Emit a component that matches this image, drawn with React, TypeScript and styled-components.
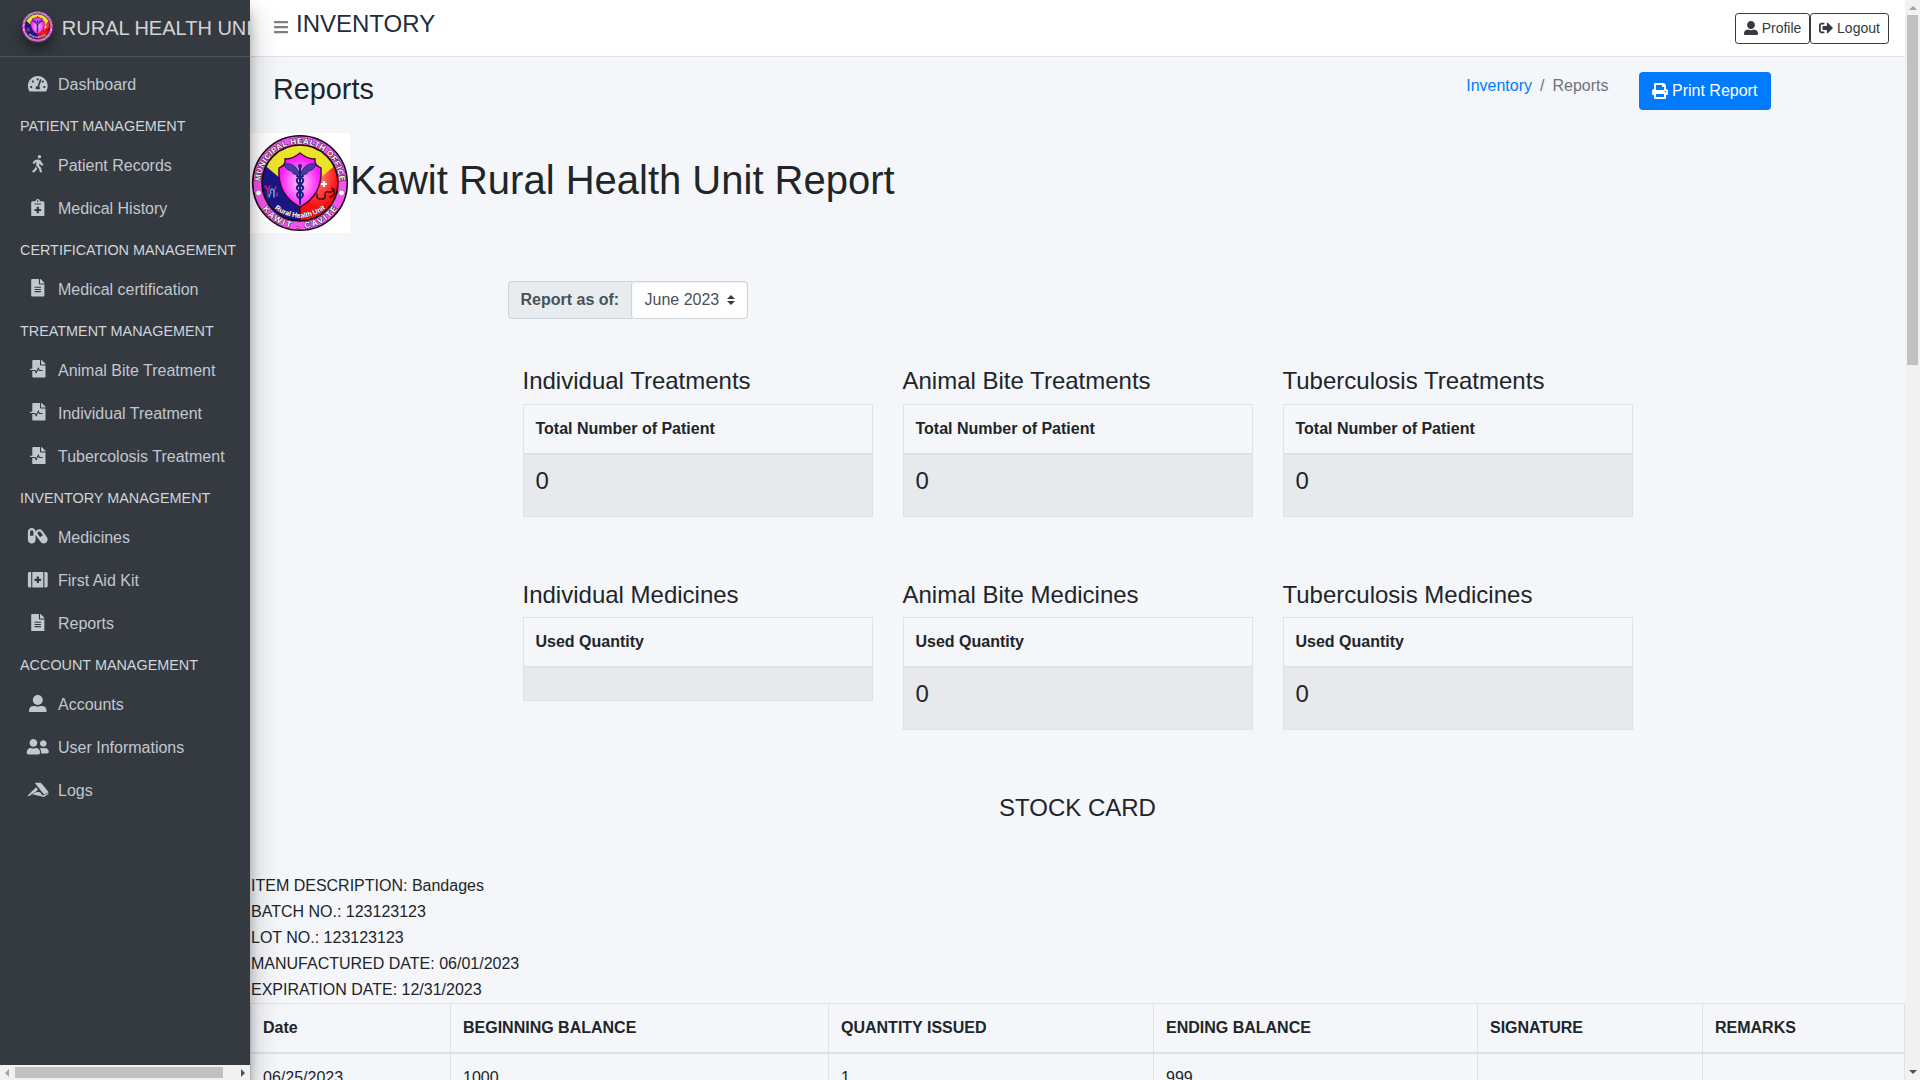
import React from "react";
import styled, { createGlobalStyle } from "styled-components";
import {
  FaTachometerAlt, FaWalking, FaNotesMedical, FaFileAlt, FaFileMedicalAlt, FaCapsules,
  FaFirstAid, FaUserAlt, FaUserFriends, FaAccusoft, FaBars, FaSignOutAlt, FaPrint,
} from "react-icons/fa";

const Global = createGlobalStyle`
  *, *::before, *::after { box-sizing: border-box; }
  body {
    margin: 0;
    background: #f4f6f9;
    color: #212529;
    font: 400 16px/1.5 "Liberation Sans", Arial, sans-serif;
    overflow: hidden;
  }
  h1, h3, h4, p { margin: 0; font-weight: 400; line-height: 1.2; }
`;

const Page = styled.div`
  display: flex;
  width: 1920px;
  height: 1080px;
  overflow: hidden;
`;

/* ---------- sidebar ---------- */
const Sidebar = styled.aside`
  position: relative;
  z-index: 2;
  flex: 0 0 250px;
  width: 250px;
  display: flex;
  flex-direction: column;
  background: #343a40;
  box-shadow: 0 14px 28px rgba(0, 0, 0, 0.25), 0 10px 10px rgba(0, 0, 0, 0.22);
`;

const Brand = styled.div`
  flex: none;
  display: flex;
  height: 57px;
  padding: 13px 0 0 20.8px;
  overflow: hidden;
  border-bottom: 1px solid #4b545c;
  color: rgba(255, 255, 255, 0.8);
  font-size: 20px;
  line-height: 30px;
  white-space: nowrap;
`;

const BrandImage = styled.span`
  flex: none;
  width: 33px;
  height: 33px;
  margin: -3px 8px 0 0;
  border-radius: 50%;
  box-shadow: 0 10px 20px rgba(0, 0, 0, 0.19), 0 6px 6px rgba(0, 0, 0, 0.23);
`;

const Nav = styled.nav`
  flex: 1;
  padding: 8px 8px 0;
`;

const NavHeader = styled.div`
  padding: 8px 0 8px 12px;
  color: #d0d4db;
  font-size: 14.4px;
  line-height: 21.6px;
  white-space: nowrap;
`;

const NavLink = styled.a`
  display: flex;
  height: 40px;
  margin-bottom: 3.2px;
  padding: 8px 16px;
  color: #c2c7d0;
  white-space: nowrap;
`;

const NavIcon = styled.span`
  flex: none;
  width: 25.6px;
  margin: 1.7px 7.6px 0 0.8px;
  svg { display: block; width: 25.6px; height: 17.6px; }
`;

const HScroll = styled.div`
  flex: none;
  display: flex;
  align-items: center;
  height: 15px;
  background: #f1f1f1;
`;

const HThumb = styled.div`
  width: 208px;
  height: 11px;
  margin-right: 18px;
  background: #c1c1c1;
`;

const Arrow = styled.span<{ $dir: "left" | "right" | "up" | "down"; $muted?: boolean }>`
  width: 0;
  height: 0;
  border: 4px solid transparent;
  ${(p) => {
    const c = p.$muted ? "#a3a3a3" : "#505050";
    if (p.$dir === "left") return `border-right-color:${c};border-left-width:0;margin:0 6px 0 5px;`;
    if (p.$dir === "right") return `border-left-color:${c};border-right-width:0;`;
    if (p.$dir === "up") return `border-bottom-color:${c};border-top-width:0;margin:6px 0 5px;`;
    return `border-top-color:${c};border-bottom-width:0;margin:auto 0 6px;`;
  }}
`;

/* ---------- main column ---------- */
const Main = styled.main`
  flex: 1;
  min-width: 0;
  display: flex;
  flex-direction: column;
`;

const Navbar = styled.header`
  flex: none;
  display: flex;
  justify-content: space-between;
  height: 57px;
  padding: 0 16px 0 24px;
  background: #fff;
  border-bottom: 1px solid #dee2e6;
`;

const NavTitle = styled.div`
  display: flex;
  gap: 8px;
  color: #1f2d3d;
  font-size: 24px;
  line-height: 28.8px;
  padding-top: 10px;
  svg { width: 14px; height: 16px; margin-top: 9px; color: rgba(0, 0, 0, 0.5); }
`;

const NavActions = styled.div`
  display: flex;
  padding-top: 13px;
`;

const SmallButton = styled.button<{ $width: number }>`
  display: flex;
  align-items: center;
  justify-content: center;
  gap: 4px;
  width: ${(p) => p.$width}px;
  height: 31px;
  padding: 0;
  border: 1px solid #343a40;
  border-radius: 3.2px;
  background: transparent;
  color: #343a40;
  font: 14px/21px "Liberation Sans", Arial, sans-serif;
  svg { flex: none; margin-top: -1px; }
`;

const ContentHeader = styled.div`
  flex: none;
  display: flex;
  align-items: flex-start;
  height: 76px;
  padding: 15px 134px 0 23px;
`;

const PageTitle = styled.h1`
  flex: 1;
  font-size: 28.8px;
`;

const Breadcrumb = styled.div`
  display: flex;
  gap: 8px;
  margin: 2px 30.5px 0 0;
  color: #6c757d;
  a { color: #007bff; }
`;

const PrintButton = styled.button`
  display: flex;
  align-items: center;
  gap: 4px;
  width: 132px;
  height: 38px;
  padding: 0 0 0 13px;
  border: 0;
  border-radius: 4px;
  background: #007bff;
  color: #fff;
  font: 16px/24px "Liberation Sans", Arial, sans-serif;
  white-space: nowrap;
  svg { flex: none; margin-top: -1px; }
`;

const ReportHead = styled.div`
  flex: none;
  display: flex;
  height: 148px;
`;

const LogoBox = styled.div`
  width: 100px;
  height: 100px;
  background: #fff;
`;

const ReportTitle = styled.h1`
  margin-top: 23px;
  font-size: 40px;
`;

const Container = styled.section`
  flex: none;
  width: 1140px;
  margin: 0 auto;
`;

const InputGroup = styled.div`
  display: flex;
  width: 240px;
  height: 38px;
  color: #495057;
`;

const GroupLabel = styled.div`
  width: 124px;
  padding: 6px 0 0 12px;
  border: 1px solid #ced4da;
  border-right: 0;
  border-radius: 4px 0 0 4px;
  background: #e9ecef;
  font-weight: 700;
`;

const Select = styled.div`
  display: flex;
  flex: 1;
  justify-content: space-between;
  padding: 6px 12px 6px 13px;
  margin-left: -1px;
  border: 1px solid #ced4da;
  border-radius: 4px;
  background: #fff;
  box-shadow: inset 0 1px 2px rgba(0, 0, 0, 0.075);
  svg { margin-top: 7px; }
`;

const CardRow = styled.div<{ $top: number }>`
  display: grid;
  grid-template-columns: repeat(3, 350px);
  column-gap: 30px;
  align-items: start;
  padding: ${(p) => p.$top}px 15px 0;
`;

const CardTitle = styled.h4`
  height: 37px;
  font-size: 24px;
  line-height: 29px;
`;

const Card = styled.div`
  border: 1px solid #dee2e6;
`;

const CardHead = styled.div`
  height: 50px;
  padding: 12px;
  border-bottom: 2px solid #dee2e6;
  font-weight: 700;
`;

const CardBody = styled.div<{ $empty: boolean }>`
  height: ${(p) => (p.$empty ? 32 : 61)}px;
  padding: 12px;
  background: rgba(0, 0, 0, 0.05);
  font-size: 24px;
  line-height: 28.8px;
`;

const Treatments = styled.div`
  height: 212px;
  ${CardTitle} { height: 38px; }
`;

const Medicines = styled.div`
  height: 213px;
`;

const StockTitle = styled.h4`
  flex: none;
  height: 129px;
  padding-top: 50px;
  font-size: 24px;
  text-align: center;
`;

const ItemInfo = styled.div`
  flex: none;
  padding-left: 1px;
  line-height: 26px;
`;

const StockTable = styled.table`
  table-layout: fixed;
  width: 1655px;
  border-collapse: separate;
  border-spacing: 0;
  border-left: 1px solid #dee2e6;
  th, td {
    height: 49px;
    padding: 12px;
    border-right: 1px solid #dee2e6;
    border-bottom: 1px solid #dee2e6;
    text-align: left;
    line-height: 24px;
  }
  th { height: 51px; border-top: 1px solid #dee2e6; border-bottom-width: 2px; }
`;

/* ---------- page scrollbar ---------- */
const VScroll = styled.div`
  flex: 0 0 15px;
  display: flex;
  flex-direction: column;
  align-items: center;
  background: #f1f1f1;
`;

const VThumb = styled.div`
  width: 11px;
  height: 350px;
  background: #c1c1c1;
`;

const SealSvg = styled.svg`
  display: block;
`;

function Seal({ size, id }: { size: number; id: string }) {
  return (
    <SealSvg width={size} height={size} viewBox="0 0 100 100">
      <defs>
        <radialGradient id={`${id}-p`} cx="50%" cy="55%" r="55%">
          <stop offset="0" stopColor="#ffc8ff" />
          <stop offset="0.85" stopColor="#ff1cf4" />
        </radialGradient>
        <radialGradient id={`${id}-r`} cx="35%" cy="25%" r="70%">
          <stop offset="0" stopColor="#ff8a80" />
          <stop offset="0.6" stopColor="#fb0d0d" />
        </radialGradient>
        <clipPath id={`${id}-c`}><circle cx="50" cy="50" r="38" /></clipPath>
        <path id={`${id}-top`} d="M 10.8 56 A 39.6 39.6 0 1 1 89.2 56" />
        <path id={`${id}-bot`} d="M 4.500 50 A 45.500 45.500 0 0 0 95.500 50" />
        <path id={`${id}-in`} d="M 23 74.500 Q 50 95 77 74.500" />
      </defs>
      <circle cx="50" cy="50" r="47.3" fill="#f552ee" stroke="#180818" strokeWidth="1.6" />
      <g clipPath={`url(#${id}-c)`}>
        <rect width="100" height="100" fill="#1b1686" />
        <path d="M50 50 L50 100 L100 100 L100 22 Z" fill={`url(#${id}-r)`} />
        <path d="M50 62 L5 24 L5 0 L95 0 L95 24 Z" fill="#ebe32a" />
        <path d="M50 60V90" stroke="#180818" strokeWidth="1" />
      </g>
      <circle cx="50" cy="50" r="38" fill="none" stroke="#180818" strokeWidth="1.6" />
      <path
        d="M50 20 Q57 26 65 26 Q64 32 71 35 Q73 62 50 74 Q27 62 29 35 Q36 32 35 26 Q43 26 50 20Z"
        fill={`url(#${id}-p)`} stroke="#2b0630" strokeWidth="1.3"
      />
      <path
        d="M49 39Q44 29 34 31Q36 38 42 38Q41 41 48 42ZM51 39Q56 29 66 31Q64 38 58 38Q59 41 52 42Z"
        fill="#4b3aa0" stroke="#17217a" strokeWidth="0.8"
      />
      <g fill="none" stroke="#17217a" strokeWidth="2" strokeLinecap="round">
        <path d="M50 33V71" />
        <path d="M47 43Q57 46 51 51Q43 55 50 58Q56 62 50 66M53 43Q43 46 49 51Q57 55 50 58Q44 62 50 66" />
      </g>
      <circle cx="50" cy="33" r="2" fill="#17217a" />
      <g fill="none" strokeWidth="1.500" strokeLinecap="round">
        <path d="M15 53l3 4v6M20 53l-2 4M26 54l-2 4v5M27 60v3" stroke="#e51b80" />
        <path d="M21 59l-2 5M20 58q2-4 4 0v6" stroke="#27b7ee" />
      </g>
      <g fill="none" stroke="#40090b" strokeWidth="1.400" strokeLinecap="round">
        <path d="M67 61q-1 6 5 5q4 0 3-4t5-3q5 0 2-4M84 56q2 7-4 8" />
      </g>
      <path d="M74 48v6M71 51h6" stroke="#fff" strokeWidth="2.2" />
      <g fill="#fff" stroke="#4a2450" strokeWidth="1.3" paintOrder="stroke" strokeLinejoin="round" fontFamily="Liberation Sans, sans-serif" fontWeight="700" textAnchor="middle">
        <text fontSize="8"><textPath href={`#${id}-top`} startOffset="50%" textLength="120" lengthAdjust="spacing">MUNICIPAL HEALTH OFFICE</textPath></text>
        <text fontSize="8.400"><textPath href={`#${id}-bot`} startOffset="50%" textLength="88" lengthAdjust="spacing">KAWIT . CAVITE</textPath></text>
        <text fontSize="7" strokeWidth="0.6"><textPath href={`#${id}-in`} startOffset="50%" textLength="55">Rural Health Unit</textPath></text>
      </g>
      <circle cx="8.500" cy="60" r="2.800" fill="#fff" stroke="#444" strokeWidth="0.4" />
      <circle cx="91.500" cy="60" r="2.800" fill="#fff" stroke="#444" strokeWidth="0.4" />
    </SealSvg>
  );
}

type Entry = { header: string } | { label: string; icon: React.ReactNode };

const entries: Entry[] = [
  { label: "Dashboard", icon: <FaTachometerAlt /> },
  { header: "PATIENT MANAGEMENT" },
  { label: "Patient Records", icon: <FaWalking /> },
  { label: "Medical History", icon: <FaNotesMedical /> },
  { header: "CERTIFICATION MANAGEMENT" },
  { label: "Medical certification", icon: <FaFileAlt /> },
  { header: "TREATMENT MANAGEMENT" },
  { label: "Animal Bite Treatment", icon: <FaFileMedicalAlt /> },
  { label: "Individual Treatment", icon: <FaFileMedicalAlt /> },
  { label: "Tubercolosis Treatment", icon: <FaFileMedicalAlt /> },
  { header: "INVENTORY MANAGEMENT" },
  { label: "Medicines", icon: <FaCapsules /> },
  { label: "First Aid Kit", icon: <FaFirstAid /> },
  { label: "Reports", icon: <FaFileAlt /> },
  { header: "ACCOUNT MANAGEMENT" },
  { label: "Accounts", icon: <FaUserAlt /> },
  { label: "User Informations", icon: <FaUserFriends /> },
  { label: "Logs", icon: <FaAccusoft /> },
];

const treatments = [
  { title: "Individual Treatments", value: "0" },
  { title: "Animal Bite Treatments", value: "0" },
  { title: "Tuberculosis Treatments", value: "0" },
];

const medicines = [
  { title: "Individual Medicines", value: "" },
  { title: "Animal Bite Medicines", value: "0" },
  { title: "Tuberculosis Medicines", value: "0" },
];

const itemLines = [
  "ITEM DESCRIPTION: Bandages",
  "BATCH NO.: 123123123",
  "LOT NO.: 123123123",
  "MANUFACTURED DATE: 06/01/2023",
  "EXPIRATION DATE: 12/31/2023",
];

const columns = [
  { name: "Date", width: 200, value: "06/25/2023" },
  { name: "BEGINNING BALANCE", width: 378, value: "1000" },
  { name: "QUANTITY ISSUED", width: 325, value: "1" },
  { name: "ENDING BALANCE", width: 324, value: "999" },
  { name: "SIGNATURE", width: 225, value: "" },
  { name: "REMARKS", width: 202, value: "" },
];

function Cards({ items, head, top }: { items: { title: string; value: string }[]; head: string; top: number }) {
  return (
    <CardRow $top={top}>
      {items.map((c) => (
        <div key={c.title}>
          <CardTitle>{c.title}</CardTitle>
          <Card>
            <CardHead>{head}</CardHead>
            <CardBody $empty={!c.value}>{c.value}</CardBody>
          </Card>
        </div>
      ))}
    </CardRow>
  );
}

export default function App() {
  return (
    <Page>
      <Global />
      <Sidebar>
        <Brand>
          <BrandImage><Seal size={33} id="brand" /></BrandImage>
          RURAL HEALTH UNIT
        </Brand>
        <Nav>
          {entries.map((e) =>
            "header" in e ? (
              <NavHeader key={e.header}>{e.header}</NavHeader>
            ) : (
              <NavLink key={e.label}>
                <NavIcon>{e.icon}</NavIcon>
                {e.label}
              </NavLink>
            )
          )}
        </Nav>
        <HScroll>
          <Arrow $dir="left" $muted />
          <HThumb />
          <Arrow $dir="right" />
        </HScroll>
      </Sidebar>

      <Main>
        <Navbar>
          <NavTitle><FaBars />INVENTORY</NavTitle>
          <NavActions>
            <SmallButton $width={75}><FaUserAlt />Profile</SmallButton>
            <SmallButton $width={79}><FaSignOutAlt />Logout</SmallButton>
          </NavActions>
        </Navbar>

        <ContentHeader>
          <PageTitle>Reports</PageTitle>
          <Breadcrumb><a>Inventory</a><span>/</span><span>Reports</span></Breadcrumb>
          <PrintButton><FaPrint />Print Report</PrintButton>
        </ContentHeader>

        <ReportHead>
          <LogoBox><Seal size={100} id="report" /></LogoBox>
          <ReportTitle>Kawit Rural Health Unit Report</ReportTitle>
        </ReportHead>

        <Container>
          <InputGroup>
            <GroupLabel>Report as of:</GroupLabel>
            <Select>
              June 2023
              <svg width="8" height="10" viewBox="0 0 4 5"><path fill="#343a40" d="M2 0L0 2h4zm0 5L0 3h4z" /></svg>
            </Select>
          </InputGroup>
          <Treatments><Cards items={treatments} head="Total Number of Patient" top={47} /></Treatments>
          <Medicines><Cards items={medicines} head="Used Quantity" top={49} /></Medicines>
        </Container>

        <StockTitle>STOCK CARD</StockTitle>
        <ItemInfo>
          {itemLines.map((l) => <div key={l}>{l}</div>)}
        </ItemInfo>
        <StockTable>
          <colgroup>{columns.map((c) => <col key={c.name} width={c.width} />)}</colgroup>
          <thead>
            <tr>{columns.map((c) => <th key={c.name}>{c.name}</th>)}</tr>
          </thead>
          <tbody>
            <tr>{columns.map((c) => <td key={c.name}>{c.value}</td>)}</tr>
          </tbody>
        </StockTable>
      </Main>

      <VScroll>
        <Arrow $dir="up" $muted />
        <VThumb />
        <Arrow $dir="down" />
      </VScroll>
    </Page>
  );
}
